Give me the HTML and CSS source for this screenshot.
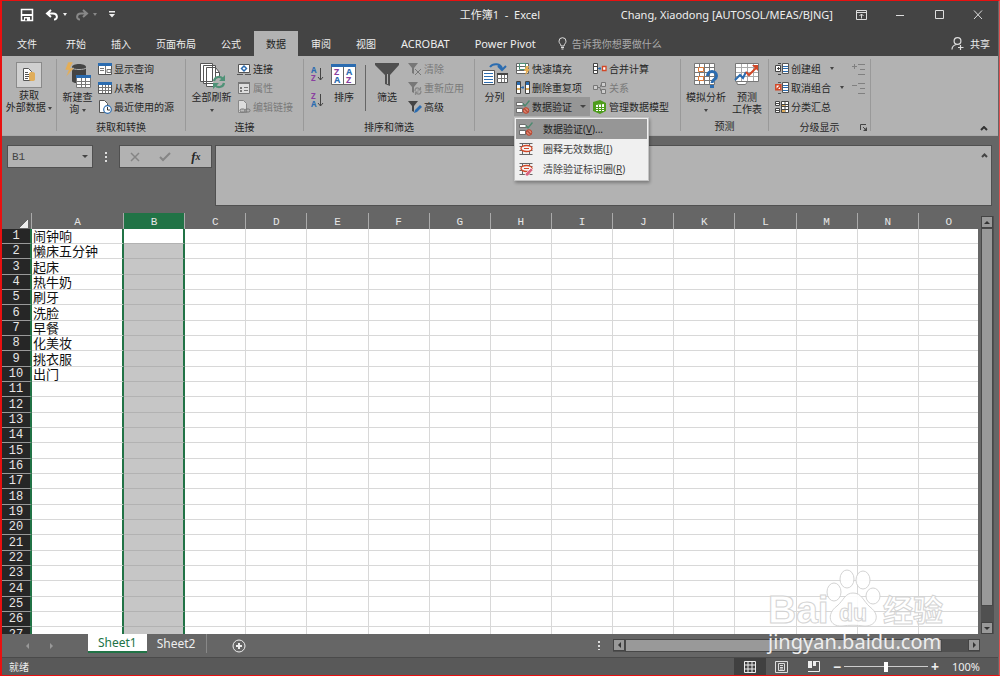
FILE: index.html
```html
<!DOCTYPE html>
<html lang="zh-CN">
<head>
<meta charset="utf-8">
<title>工作簿1 - Excel</title>
<link rel="stylesheet" href="styles.css">
</head>
<body>
<svg class="defs" aria-hidden="true">
  <symbol id="grid" viewBox="0 0 14 14"><path fill="#fff" stroke="#555" d="M.5 1.500h13v11H.5z"/><path stroke="#777" d="M1 6.500h12M1 9.500h12M4.500 4v8M7.500 4v8M10.500 4v8"/><path fill="#2b6cb0" d="M0 1h14v3H0z"/></symbol>
  <symbol id="valid" viewBox="0 0 14 14"><path fill="#fff" stroke="#555" stroke-width=".8" d="M.5 2.500h6l2 2-1 1h-7zM.5 8.500h6v4h-6z"/><path fill="none" stroke="#4d8a70" stroke-width="1.400" d="M6.500 3.500l2.500 2.500 4.500-5.500"/><circle cx="10" cy="10.500" r="2.800" fill="#d9826c" stroke="#c0432c"/><path stroke="#8d2d1c" d="M8.300 8.800l3.500 3.500"/></symbol>
  <symbol id="circled" viewBox="0 0 14 14"><path fill="#fff" stroke="#666" d="M.5 1.500h13M.5 4.500h13M.5 8.500h13M.5 12.500h13M3.500 1v12M10.500 1v12"/><ellipse cx="7.500" cy="6.500" rx="5.500" ry="3" fill="#f4f4f4" stroke="#d24726" stroke-width="1.300"/><path stroke="#d24726" d="M5 6.500h5"/></symbol>
</svg>
<div class="window">
  <header class="titlebar">
    <div class="quick">
      <button aria-label="保存"><svg width="14" height="14" viewBox="0 0 14 14"><path fill="none" stroke="#fff" stroke-width="1.500" d="M1.500 1.500h11v11h-11z"/><path fill="#fff" d="M2 6h10v2H2zM4 9h6v4H4z"/><path fill="#444" d="M5 10.500h2v2H5z"/></svg></button>
      <button class="undo" aria-label="撤消"><svg width="14" height="12" viewBox="0 0 14 12"><path fill="none" stroke="#fff" stroke-width="2" d="M6 1L2 4.500 6 8M2 4.500h6c5 0 5 6 1 6"/></svg><i class="caret light"></i></button>
      <button class="redo" aria-label="恢复"><svg width="14" height="12" viewBox="0 0 14 12"><path fill="none" stroke="#888" stroke-width="2" d="M8 1l4 3.500L8 8M12 4.500H6c-5 0-5 6-1 6"/></svg><i class="caret dim"></i></button>
      <button class="more" aria-label="自定义快速访问工具栏"><svg width="6" height="7" viewBox="0 0 6 7"><path fill="#eee" d="M0 0h6v1.500H0zM0 3h6L3 6.500z"/></svg></button>
    </div>
    <h1>工作簿1&nbsp; -&nbsp; Excel</h1>
    <div class="account">
      <span class="user">Chang, Xiaodong [AUTOSOL/MEAS/BJNG]</span>
      <div class="winbtns">
        <button aria-label="功能区显示选项"><svg width="11" height="10" viewBox="0 0 11 10"><path fill="none" stroke="#ddd" d="M.5.5h10v9H.5zM0 2.500h11M5.500 8.500V4M3.500 6l2-2 2 2"/></svg></button>
        <button aria-label="最小化"><svg width="11" height="10"><path stroke="#ddd" d="M1 5.500h8"/></svg></button>
        <button aria-label="最大化"><svg width="11" height="10"><path fill="none" stroke="#ddd" d="M1.500.5h8v8h-8z"/></svg></button>
        <button aria-label="关闭"><svg width="11" height="10"><path stroke="#ddd" d="M1 .5l8 8.500M9 .5L1 9"/></svg></button>
      </div>
    </div>
  </header>

  <nav class="tabs">
    <button class="file">文件</button><button>开始</button><button>插入</button><button>页面布局</button><button>公式</button><button class="active">数据</button><button>审阅</button><button>视图</button><button class="latin">ACROBAT</button><button class="latin">Power Pivot</button>
    <label class="tell"><svg width="9" height="13" viewBox="0 0 9 13"><path fill="none" stroke="#ddd" d="M3 9C3 7 1 6.500 1 4.200a3.500 3.500 0 0 1 7 0C8 6.500 6 7 6 9zM3 10.500h3M3.500 12h2"/></svg><input type="text" placeholder="告诉我你想要做什么" aria-label="告诉我你想要做什么"></label>
    <button class="share"><svg width="13" height="13" viewBox="0 0 13 13"><g fill="none" stroke="#ddd" stroke-width="1.200"><circle cx="6.500" cy="4" r="3.400"/><path d="M1 12.500c0-3 2-4.500 4.500-5M9.500 8v5M7 10.500h5.500"/></g></svg>共享</button>
  </nav>

  <section class="ribbon">
    <div class="group g-ext">
      <div class="tools">
        <button class="big"><span class="tile"><svg width="14" height="14" viewBox="0 0 14 14"><path fill="#fff" stroke="#555" d="M1.500.5h5l3 3v9h-8z"/><path stroke="#555" d="M3 4.500h3M3 6.500h4M3 8.500h4M3 10.500h3"/><path fill="#e0ad5a" d="M7 5.500c0-2 6-2 6 0v6c0 2-6 2-6 0z"/></svg></span><span>获取<br>外部数据 <i class="caret"></i></span></button>
      </div>
    </div>
    <div class="group g-query">
      <div class="tools">
        <button class="big"><svg width="28" height="28" viewBox="0 0 28 28"><path fill="#444" d="M8 5c0-4 14-4 14 0v14c0 3-14 3-14 0z"/><path fill="none" stroke="#b2b2b2" d="M8 6c1 2 13 2 14 0"/><path fill="#e5ae55" stroke="#b2b2b2" stroke-width=".5" d="M4 0h5L6 6h4l-8 9 2.500-7H1z"/><path fill="#fff" stroke="#777" d="M12.500 14.500h14v11h-14z"/><path fill="#2b6cb0" d="M12 13h15v3H12z"/><path stroke="#777" d="M13 19.500h13M13 22.500h13M17.500 16v9M21.500 16v9"/></svg><span>新建查<br>询 <i class="caret"></i></span></button>
        <div class="stack">
          <button><svg width="14" height="14" viewBox="0 0 14 14"><path fill="#fff" stroke="#555" d="M.5 1.500h13v11H.5z"/><path fill="#2b6cb0" d="M0 1h14v3H0z"/><path stroke="#777" d="M2 6.500h4M2 8.500h4M7.500 4v8M9 7.500h4v3H9z" fill="none"/></svg>显示查询</button>
          <button><svg width="14" height="14"><use href="#grid"/></svg>从表格</button>
          <button><svg width="14" height="14" viewBox="0 0 14 14"><path fill="#fff" stroke="#555" d="M1.500.5h5l3 3v9h-8z"/><circle cx="9.500" cy="9.500" r="3.800" fill="#fff" stroke="#2b6cb0" stroke-width="1.200"/><path fill="none" stroke="#333" d="M9.500 7v3H12"/></svg>最近使用的源</button>
        </div>
      </div>
      <h2>获取和转换</h2>
    </div>
    <div class="group g-conn">
      <div class="tools">
        <button class="big"><svg width="28" height="28" viewBox="0 0 28 28"><path fill="#fff" stroke="#555" d="M2.500 1.500h12v18h-12zM5.500 3.500h12v18h-12zM8.500 5.500h9l4 5v14h-13z"/><path fill="none" stroke="#555" d="M17.500 5.500v5h4"/><circle cx="21" cy="20" r="6" fill="#b2b2b2"/><path fill="none" stroke="#4f9277" stroke-width="2.200" d="M16 19c1-5 7-5 9-2M26 21c-1 5-7 5-9 2"/><path fill="#4f9277" d="M27 13v6h-6zM15 27v-6h6z"/></svg><span>全部刷新<br><i class="caret"></i></span></button>
        <div class="stack">
          <button><svg width="14" height="14" viewBox="0 0 14 14"><path fill="#fff" stroke="#555" d="M1.500 2.500h11v8h-11zM0 12.500h6M8 12.500h6"/><path fill="none" stroke="#2b6cb0" stroke-width="1.500" d="M7 4l2.500 2.500L7 9 4.500 6.500z"/></svg>连接</button>
          <button disabled><svg width="14" height="14" viewBox="0 0 14 14"><path fill="#ddd" stroke="#777" d="M1.500 1.500h11v11h-11z"/><path fill="#777" d="M1 1h12v2H1zM3 6h2v2H3zM3 9h2v2H3zM7 6h4v1H7zM7 9h4v1H7z"/></svg>属性</button>
          <button disabled><svg width="14" height="14" viewBox="0 0 14 14"><path fill="#ddd" stroke="#888" d="M1.500.5h5l3 3v9h-8z"/><rect x="3" y="9" width="5" height="3" rx="1.500" fill="#bbb" stroke="#777"/><rect x="8" y="9" width="5" height="3" rx="1.500" fill="none" stroke="#777"/></svg>编辑链接</button>
        </div>
      </div>
      <h2>连接</h2>
    </div>
    <div class="group g-sort">
      <div class="tools">
        <div class="azstack">
          <button aria-label="升序"><svg width="14" height="16" viewBox="0 0 14 16"><g font-size="8" font-weight="bold"><text y="7" fill="#2b6cb0">A</text><text y="15" fill="#8a3fa0">Z</text></g><path fill="none" stroke="#444" d="M9.500 2v12M7 11l2.500 3 2.500-3"/></svg></button>
          <button aria-label="降序"><svg width="14" height="16" viewBox="0 0 14 16"><g font-size="8" font-weight="bold"><text y="7" fill="#8a3fa0">Z</text><text y="15" fill="#2b6cb0">A</text></g><path fill="none" stroke="#444" d="M9.500 2v12M7 11l2.500 3 2.500-3"/></svg></button>
        </div>
        <button class="big"><svg width="26" height="28" viewBox="0 0 26 28"><path fill="#fff" stroke="#666" d="M.5 2.500h24v20H.5zM12.500 4v18"/><path fill="#2b6cb0" d="M0 2h25v3H0z"/><g font-size="9" font-weight="bold"><text x="3" y="13" fill="#8a3fa0">Z</text><text x="3" y="21" fill="#2b6cb0">A</text><text x="15" y="13" fill="#2b6cb0">A</text><text x="15" y="21" fill="#8a3fa0">Z</text></g></svg><span>排序</span></button>
        <div class="rule"></div>
        <button class="big"><svg width="26" height="28" viewBox="0 0 26 28"><path fill="#505050" d="M1 1h24v2l-9 10v11l-5-2v-9L1 3z"/><path fill="#b2b2b2" d="M13 12h1v10h-1z"/></svg><span>筛选</span></button>
        <div class="stack">
          <button disabled><svg width="14" height="14" viewBox="0 0 14 14"><path fill="#777" d="M0 1h10L6 6v6l-2-1V6z"/><path stroke="#777" d="M7 7l6 6M13 7l-6 6"/></svg>清除</button>
          <button disabled><svg width="14" height="14" viewBox="0 0 14 14"><path fill="#777" d="M0 1h10L6 6v6l-2-1V6z"/><path fill="none" stroke="#888" stroke-width="1.200" d="M7 10c0-4 4-4 5-1M13 10c0 4-4 4-5 1M12.500 6v3h-3M7.500 14v-3h3"/></svg>重新应用</button>
          <button><svg width="14" height="14" viewBox="0 0 14 14"><path fill="#444" d="M0 1h10L6 6v6l-2-1V6z"/><path fill="#2b6cb0" d="M12 5l2 2-5 5-3 1 1-3z"/></svg>高级</button>
        </div>
      </div>
      <h2>排序和筛选</h2>
    </div>
    <div class="group g-data">
      <div class="tools">
        <button class="big"><svg width="28" height="28" viewBox="0 0 28 28"><path fill="#fff" stroke="#555" d="M1.500 8.500h12v14h-12zM16.500 11.500h10v9h-10z"/><path stroke="#2b6cb0" d="M3 11.500h9M3 14.500h9M3 17.500h9M3 20.500h9"/><path stroke="#777" d="M16 16.500h11M20.500 12v8M23.500 12v8"/><path fill="#444" d="M16 11h11v2H16z"/><path fill="none" stroke="#2b6cb0" stroke-width="2" d="M9 5c3-4 11-4 12 2M17 4l4 4 4-4"/></svg><span>分列</span></button>
        <div class="stack s-valid">
          <button><svg width="14" height="14" viewBox="0 0 14 14"><path fill="#fff" stroke="#666" d="M.5 1.500h12v10H.5zM0 4.500h12M0 8.500h12"/><path fill="none" stroke="#4f9277" d="M3.500 1.500h6v6h-6z"/><path fill="#e5ae55" d="M10 4h3l-1 3h2l-5 7 1-5H8z"/></svg>快速填充</button>
          <button><svg width="14" height="14" viewBox="0 0 14 14"><path fill="#fff" stroke="#444" d="M.5.5h4v12h-4zM9.500.5h4v12h-4z"/><path fill="#2b6cb0" d="M1 1h3v3H1zM10 1h3v3h-3z"/><path fill="#e0ad5a" d="M1 7h3v2H1zM10 7h3v2h-3z"/><path stroke="#2b6cb0" d="M5 6.500h3M7 5v3"/></svg>删除重复项</button>
          <div class="dropdown">
            <button class="open"><svg width="14" height="14"><use href="#valid"/></svg>数据验证<i class="caret"></i></button>
            <div class="menu" role="menu">
              <button class="hover" role="menuitem"><svg width="14" height="14"><use href="#valid"/></svg>数据验证(<u>V</u>)...</button>
              <button role="menuitem"><svg width="14" height="14"><use href="#circled"/></svg>圈释无效数据(<u>I</u>)</button>
              <button role="menuitem"><svg width="14" height="14" viewBox="0 0 14 14"><use href="#circled"/><path fill="#d8647f" stroke="#fff" stroke-width=".6" d="M12 6l2 2-5 6H7l-1-2z"/></svg>清除验证标识圈(<u>R</u>)</button>
            </div>
          </div>
        </div>
        <div class="stack">
          <button><svg width="14" height="14" viewBox="0 0 14 14"><path fill="#fff" stroke="#444" d="M.5 1.500h4v10h-4zM0 4.500h4M0 8.500h4"/><path stroke="#2b6cb0" d="M5 6.500h3M7 5v3"/><path fill="#fff" stroke="#d24726" stroke-width="1.300" d="M9.500 4.500h3.500v4H9.500z"/></svg>合并计算</button>
          <button disabled><svg width="14" height="14" viewBox="0 0 14 14"><path fill="#ccc" stroke="#777" d="M.5 4.500h4v4h-4zM8.500 1.500h4v4h-4zM8.500 8.500h4v4h-4zM5 6.500h2l1-3M7 7l1 3"/></svg>关系</button>
          <button><svg width="14" height="14" viewBox="0 0 14 14"><path fill="#4e9d1d" d="M0 2l7-2 6 3v8l-6 3-7-3z"/><path fill="#fff" d="M3 5l8-1v7H3z"/><path stroke="#4e9d1d" d="M3 7.500h8M3 9.500h8M5.500 5v6M8.500 4v7"/></svg>管理数据模型</button>
        </div>
      </div>
    </div>
    <div class="group g-fore">
      <div class="tools">
        <button class="big"><svg width="28" height="28" viewBox="0 0 28 28"><path fill="#fff" stroke="#777" d="M2.500 1.500h20v21h-20zM2 5.500h20M2 10.500h20M2 14.500h20M2 18.500h20M7.500 1v21M12.500 1v21M17.500 1v21"/><path fill="#fff" stroke="#e07b39" d="M6.500 5.500h5v4h-5zM6.500 14.500h5v4h-5z"/><path fill="none" stroke="#2b6cb0" stroke-width="3" d="M15.500 14c0-6 9-6 9 0 0 4-4.500 3-4.500 7"/><path fill="#2b6cb0" d="M18 23h4v3h-4z"/></svg><span>模拟分析<br><i class="caret"></i></span></button>
        <button class="big"><svg width="26" height="28" viewBox="0 0 26 28"><path fill="#fff" stroke="#777" d="M1.500 1.500h23v18h-23z"/><path stroke="#aaa" d="M2 5.500h22M2 10.500h22M2 14.500h22M7.500 2v17M13.500 2v17M19.500 2v17"/><path fill="#fff" stroke="#777" d="M2.500 19.500h11l-2 3h-8z"/><path fill="none" stroke="#2b6cb0" stroke-width="2" d="M1 18l5-5 3 3 3-6"/><path fill="none" stroke="#d24726" stroke-width="2" d="M12 10l3 3 7-7"/><path fill="#d24726" d="M18 3h6v6z"/></svg><span>预测<br>工作表</span></button>
      </div>
      <h2>预测</h2>
    </div>
    <div class="group g-outline">
      <div class="tools">
        <div class="stack">
          <button><svg width="14" height="14" viewBox="0 0 14 14"><path fill="#fff" stroke="#555" d="M7.500 1.500h6v10h-6z"/><path stroke="#2b6cb0" d="M8 4.500h5M8 6.500h5M8 9.500h5"/><path fill="#fff" stroke="#444" d="M.5 3.500h5v6h-5zM2 6.500h3M3.500 5v3M3 1.500h3M3 12.500h3"/></svg>创建组<i class="caret far"></i></button>
          <button><svg width="14" height="14" viewBox="0 0 14 14"><path fill="#fff" stroke="#555" d="M7.500 1.500h6v10h-6zM3 1.500h3M3 12.500h3"/><path stroke="#2b6cb0" d="M8 4.500h5M8 6.500h5M8 9.500h5"/><path fill="#fff" stroke="#d24726" stroke-width="1.500" d="M.8 3.800h5v5h-5zM2 8l4-4"/></svg>取消组合<i class="caret far"></i></button>
          <button><svg width="14" height="14" viewBox="0 0 14 14"><path fill="#fff" stroke="#444" d="M.5 1.500h4v4h-4zM.5 8.500h4v4h-4zM6.500 1.500h7v11h-7zM6 4.500h7M6 6.500h7M6 9.500h7M10 1v11M1 3.500h3M1 10.500h3"/><path fill="#e0ad5a" d="M7 5h3v1H7zM7 10h3v2H7z"/></svg>分类汇总</button>
        </div>
        <div class="stack">
          <button disabled aria-label="显示明细数据"><svg width="13" height="12"><path stroke="#808080" d="M0 3.500h5M2.500 1v5M6 1.500h7M8 6.500h5M6 11.500h7"/></svg></button>
          <button disabled aria-label="隐藏明细数据"><svg width="13" height="12"><path stroke="#808080" d="M0 3.500h5M6 1.500h7M8 6.500h5M6 11.500h7"/></svg></button>
        </div>
      </div>
      <h2>分级显示</h2>
      <button class="launcher" aria-label="分级显示设置"><svg width="7" height="7"><path fill="none" stroke="#444" d="M.5 6V.5H6M3 3l3 3"/><path fill="#444" d="M7 3v4H3z"/></svg></button>
    </div>
    <button class="collapse" aria-label="折叠功能区"><svg width="8" height="5"><path fill="none" stroke="#333" stroke-width="2" d="M1 4l3-3 3 3"/></svg></button>
  </section>

  <section class="formula">
    <label class="namebox"><input type="text" value="B1" aria-label="名称框"><i class="caret"></i></label>
    <span class="dots"></span>
    <div class="fx">
      <button aria-label="取消"><svg width="10" height="10"><path stroke="#858585" stroke-width="1.500" d="M1 1l8 8M9 1L1 9"/></svg></button>
      <button aria-label="输入"><svg width="12" height="10"><path fill="none" stroke="#858585" stroke-width="2" d="M1 5l3 3 7-7"/></svg></button>
      <button class="fn" aria-label="插入函数">f<small>x</small></button>
    </div>
    <div class="editor"><textarea aria-label="编辑栏"></textarea><svg width="7" height="5"><path fill="none" stroke="#444" stroke-width="2" d="M1 4l2.500-2.500L6 4"/></svg></div>
  </section>

  <main class="sheet">
    <div class="cells">
      <table>
        <colgroup><col class="c-num"><col class="c-a"><col span="14"></colgroup>
        <thead><tr id="heads"><th class="corner"></th></tr></thead>
        <tbody id="rows"></tbody>
      </table>
    </div>
    <div class="vscroll"><button aria-label="向上滚动"><i class="up"></i></button><span class="thumb"></span><button aria-label="向下滚动"><i class="down"></i></button></div>
  </main>

  <footer>
    <div class="sheetbar">
      <div class="navs"><button aria-label="上一张"><i class="left"></i></button><button aria-label="下一张"><i class="right"></i></button></div>
      <button class="sheettab current">Sheet1</button><button class="sheettab">Sheet2</button>
      <button class="add" aria-label="新工作表"><svg width="14" height="14"><circle cx="7" cy="7" r="6" fill="none" stroke="#eee"/><path stroke="#eee" stroke-width="2" d="M4 7h6M7 4v6"/></svg></button>
      <span class="dots"></span>
      <div class="hscroll"><button aria-label="向左滚动"><i class="left"></i></button><span class="thumb"></span><button aria-label="向右滚动"><i class="right"></i></button></div>
    </div>
    <div class="status">
      <span>就绪</span>
      <div class="views">
        <button class="on" aria-label="普通"><svg width="12" height="12"><path fill="none" stroke="#eee" d="M.5.5h11v11H.5zM0 4h12M0 8h12M4 0v12M8 0v12"/></svg></button>
        <button aria-label="页面布局"><svg width="13" height="12"><path fill="none" stroke="#ddd" d="M.5.5h12v11H.5zM3.500 2.500h6v7h-6zM5 4.500h3M5 6.500h3M5 8h3"/></svg></button>
        <button aria-label="分页预览"><svg width="12" height="12"><path fill="#eee" d="M0 0h4v7H0zM5 0h3v5H5z"/><path fill="none" stroke="#eee" d="M0 10.500h11.500V.5H8"/></svg></button>
      </div>
      <div class="zoom"><button aria-label="缩小">−</button><input type="range" min="0" max="100" value="50" aria-label="缩放"><button aria-label="放大">+</button><span>100%</span></div>
    </div>
  </footer>

  <div class="watermark">
    <svg width="184" height="62" viewBox="0 0 184 62">
      <g fill="#fff" stroke="#d0d0d0" stroke-width="1">
        <text class="mark" x="3" y="56" font-size="39">Bai</text>
        <ellipse cx="69" cy="25" rx="7" ry="9"/><ellipse cx="82" cy="12" rx="7" ry="9"/><ellipse cx="98" cy="13" rx="7" ry="9"/><ellipse cx="108" cy="29" rx="7" ry="8"/>
        <path d="M88 26c9 0 10 8 17 14 12 9 5 20-6 19-8-1-14-1-22 0-13 1-16-12-5-20 7-6 8-13 16-13z"/>
        <text class="mark" x="74" y="54" font-size="23">du</text>
        <text class="cn" x="118" y="54" font-size="30">经验</text>
      </g>
    </svg>
    <span>jingyan.baidu.com</span>
  </div>
</div>
<script src="app.js"></script>
</body>
</html>
```
FILE: styles.css
```css
* { box-sizing: border-box; }
body {
  margin: 0;
  font: 10px/12px "Noto Sans", "Noto Sans CJK SC", sans-serif;
  color: #262626;
}
button, input, textarea { font: inherit; color: inherit; background: none; border: 0; padding: 0; margin: 0; }
button { display: flex; align-items: center; justify-content: center; white-space: nowrap; }
svg { flex: none; display: block; }
.defs { display: none; }
.window {
  position: relative;
  display: flex;
  flex-direction: column;
  height: 100vh;
  background: #666;
  border: 1px solid #e81010;
  border-left-width: 2px;
  border-right-color: #e05050;
  padding-right: 1px;
}

/* triangles */
.caret, .up, .down, .left, .right { display: inline-block; width: 0; height: 0; border: 3px solid transparent; }
.caret { border-width: 2px; border-top: 3px solid #444; border-bottom: 0; vertical-align: middle; }
.caret.light { border-top-color: #eee; margin-left: 4px; }
.caret.dim { border-top-color: #888; margin-left: 4px; }
.up { border-bottom-color: #333; border-top: 0; }
.down { border-top-color: #333; border-bottom: 0; }
.left { border-right-color: #333; border-left: 0; }
.right { border-left-color: #333; border-right: 0; }

/* title bar */
.titlebar { display: grid; grid-template-columns: 1fr auto 1fr; align-items: center; height: 27px; background: #444; color: #eee; font-size: 11px; }
.quick { display: flex; align-items: center; padding-left: 18px; }
.undo { margin-left: 11px; }
.redo { margin-left: 8px; }
.more { margin-left: 12px; }
.titlebar h1 { margin: 0; font-size: 11px; font-weight: 400; }
.account { display: flex; justify-content: flex-end; align-items: center; }
.winbtns { display: flex; margin-left: 9px; }
.winbtns button { width: 39px; height: 27px; }

/* tabs */
.tabs { display: flex; height: 28px; padding-top: 3px; gap: 1px; background: #444; color: #eee; }
.tabs > button { padding: 0 12px; }
.tabs .file { padding: 0 16px 0 15px; }
.tabs .active { background: #b2b2b2; color: #222; }
.tabs .latin { font-size: 11px; }
.tell { display: flex; align-items: center; gap: 5px; padding-left: 9px; }
.tell input { width: 120px; }
.tell input::placeholder { color: #aaa; opacity: 1; }
.tabs .share { margin-left: auto; padding: 0 8px; gap: 6px; }

/* ribbon */
.ribbon { display: flex; height: 80px; flex: none; background: #b2b2b2; padding: 3px 0 0; border-bottom: 1px solid #aaa; }
.group { position: relative; flex: none; display: flex; flex-direction: column; margin-bottom: 4px; border-right: 1px solid #999; }
.group h2 { margin: 0; padding-top: 4px; font-size: 10px; line-height: 14px; font-weight: 400; text-align: center; }
.tools { display: flex; height: 58px; }
.big { flex-direction: column; justify-content: flex-start; align-items: center; padding-top: 3px; }
.big span { text-align: center; line-height: 12px; margin-top: 1px; }
.big .tile { display: flex; align-items: center; justify-content: center; width: 26px; height: 26px; margin: 0; background: #d0d0d0; border: 1px solid #8a8a8a; }
.stack { display: flex; flex-direction: column; }
.stack button { height: 19px; gap: 2px; justify-content: flex-start; }
.stack button:disabled { color: #7a7a7a; }
.g-ext { width: 55px; }
.g-query { width: 129px; }
.g-conn { width: 118px; }
.g-sort { width: 171px; }
.g-data { width: 206px; }
.g-fore { width: 88px; }
.g-outline { width: 102px; }
.g-ext .big { width: 54px; }
.g-query .big { width: 41px; }
.g-conn .big { width: 51px; }
.azstack { display: flex; flex-direction: column; gap: 10px; padding: 7px 5px 0 7px; }
.g-sort .big { width: 28px; }
.g-sort .rule + .big { width: 42px; }
.rule { width: 1px; height: 46px; margin: 6px 0 0 7px; background: #666; }
.g-data .big { width: 39px; }
.s-valid { width: 79px; }
.g-fore .big { width: 50px; }
.g-fore .big + .big { width: 32px; }
.g-outline .tools { padding-left: 6px; gap: 8px; }
.far { margin-left: 7px; }
.launcher { position: absolute; right: 3px; bottom: 0; }
.collapse { margin: auto 10px 4px auto; }

/* drop-down */
.dropdown { position: relative; }
.dropdown .open { width: 76px; background: #969696; }
.open .caret { margin-left: 6px; }
.s-valid > button, .s-valid .open { padding-left: 2px; }
.menu { position: absolute; z-index: 5; top: 20px; left: 0; width: 135px; padding: 1px; background: #f0f0f0; border: 1px solid #c4c4c4; box-shadow: 1px 2px 3px rgba(0,0,0,.3); color: #444; }
.stack .menu button { width: 100%; height: 20px; padding-left: 3px; gap: 0; text-align: left; }
.menu svg { margin-right: 10px; }
.menu .hover { background: #969696; color: #222; }

/* formula bar */
.formula { display: flex; align-items: flex-start; padding: 9px 6px 7px 5px; }
.namebox, .fx, .editor { background: #b2b2b2; border: 1px solid #505050; }
.namebox { display: flex; align-items: center; width: 86px; height: 23px; padding: 0 4px; }
.namebox input { width: 100%; font: 11px "Liberation Mono", monospace; color: #444; }
.namebox .caret, .open .caret { flex: none; border-width: 3px; border-bottom: 0; }
.dots { width: 2px; height: 9px; background: repeating-linear-gradient(#ddd 0 2px, transparent 2px 4px); }
.formula .dots { margin: 7px 12px; height: 10px; }
.fx { display: flex; width: 93px; height: 23px; margin-right: 3px; }
.fx button { flex: 1; }
.fn { font: italic bold 13px "Liberation Serif", serif; }
.fn small { font-size: 10px; }
.editor { display: flex; flex: 1; height: 61px; padding: 7px 3px; }
.editor textarea { flex: 1; resize: none; }

/* cells */
.sheet { flex: 1; min-height: 0; display: flex; }
.cells { flex: 1; min-width: 0; overflow: hidden; }
table { width: calc(100% + 2px); table-layout: fixed; border-collapse: separate; border-spacing: 0; font: 13px/14px "Noto Sans CJK SC", sans-serif; }
.c-num { width: 30px; }
.c-a { width: 92px; }
th, td { padding: 0; font-weight: 400; }
th { font-family: "Liberation Mono", monospace; color: #e6e6e6; }
thead th { height: 16px; font-size: 11px; border-right: 1px solid #aaa; line-height: 14px; padding-top: 2px; }
thead .sel { background: #217346; }
.corner { background: linear-gradient(135deg, transparent 50%, #eee 50%) no-repeat 18px 7px / 8px 8px; }
tbody { background: #fff; }
tbody tr { height: 15px; }
tbody tr:nth-child(3n) { height: 16px; }
tbody th { background: #262626; font-size: 12px; border-bottom: 1px solid #999; border-right: 2px solid #217346; }
td { border-right: 1px solid #d8d8d8; border-bottom: 1px solid #d8d8d8; white-space: nowrap; line-height: 14px; }
td:nth-child(2) { padding-left: 1px; color: #111; border-right: 2px solid #217346; }
td:nth-child(3) { background: #c6c6c6; border-right: 2px solid #217346; border-bottom-color: #b2b2b2; }
tr:first-child td:nth-child(3) { background: #fff; }
.vscroll { display: flex; flex-direction: column; width: 13px; margin: 3px 4px 0 3px; background: #505050; }
.vscroll button, .hscroll button { flex: none; width: 12px; height: 12px; background: #999; border: 1px solid #444; }
.thumb { background: #999; border: 1px solid #484848; }
.vscroll .thumb { flex: 1; margin-bottom: 16px; width: 12px; }

/* bottom bars */
.sheetbar { display: flex; align-items: center; height: 23px; padding-right: 18px; font: 12px/16px "Noto Sans", sans-serif; color: #eee; }
.navs { display: flex; width: 86px; padding-left: 24px; gap: 21px; }
.navs .left { border-right-color: #999; }
.navs .right { border-left-color: #999; }
.sheettab { height: 19px; align-self: flex-start; padding: 0 10px; }
.current { background: #fff; color: #217346; border-bottom: 2px solid #217346; }
.sheettab:not(.current) { border-right: 1px solid #888; }
.add { margin: 0 auto 0 25px; }
.sheetbar .dots { margin-right: 13px; }
.hscroll { display: flex; width: 367px; height: 13px; background: #505050; }
.hscroll .thumb { flex: 1; margin-right: 26px; }
.status { display: flex; align-items: center; height: 18px; padding: 0 18px 0 7px; background: #595959; border-top: 1px solid #4a4a4a; color: #eee; }
.views { display: flex; margin-left: auto; }
.views button { width: 32px; height: 17px; }
.views .on { background: #404040; }
.zoom { display: flex; align-items: center; font-size: 11px; margin-left: 2px; }
.zoom button { width: 10px; font-size: 14px; font-weight: bold; }
.zoom span { margin-left: 12px; }
.zoom input { appearance: none; width: 84px; height: 12px; margin: 0 2px; background: linear-gradient(#ccc, #ccc) center / 100% 1px no-repeat; }
.zoom input::-webkit-slider-thumb { appearance: none; width: 4px; height: 10px; background: #fff; }

/* watermark over the sheet corner */
.watermark { position: absolute; right: 50px; bottom: 20px; width: 184px; color: #eee; pointer-events: none; }
.watermark svg { opacity: .9; }
.mark { font-family: "Liberation Sans", sans-serif; font-weight: bold; }
.cn { font-family: "Noto Sans CJK SC", sans-serif; font-weight: bold; }
.watermark span { display: block; padding-left: 3px; font: 20px/26px "Noto Sans", sans-serif; }
```
FILE: app.js
```js
const items = ["闹钟响", "懒床五分钟", "起床", "热牛奶", "刷牙", "洗脸", "早餐", "化美妆", "挑衣服", "出门"];
const letters = "ABCDEFGHIJKLMNO".split("");
const heads = document.getElementById("heads");
const rows = document.getElementById("rows");

letters.forEach((letter) => {
  const th = document.createElement("th");
  th.textContent = letter;
  if (letter === "B") th.className = "sel";
  heads.appendChild(th);
});

for (let r = 1; r <= 27; r++) {
  const tr = rows.insertRow();
  const th = document.createElement("th");
  th.textContent = r;
  tr.appendChild(th);
  letters.forEach((letter) => {
    const td = tr.insertCell();
    if (letter === "A") td.textContent = items[r - 1] || "";
  });
}
```
